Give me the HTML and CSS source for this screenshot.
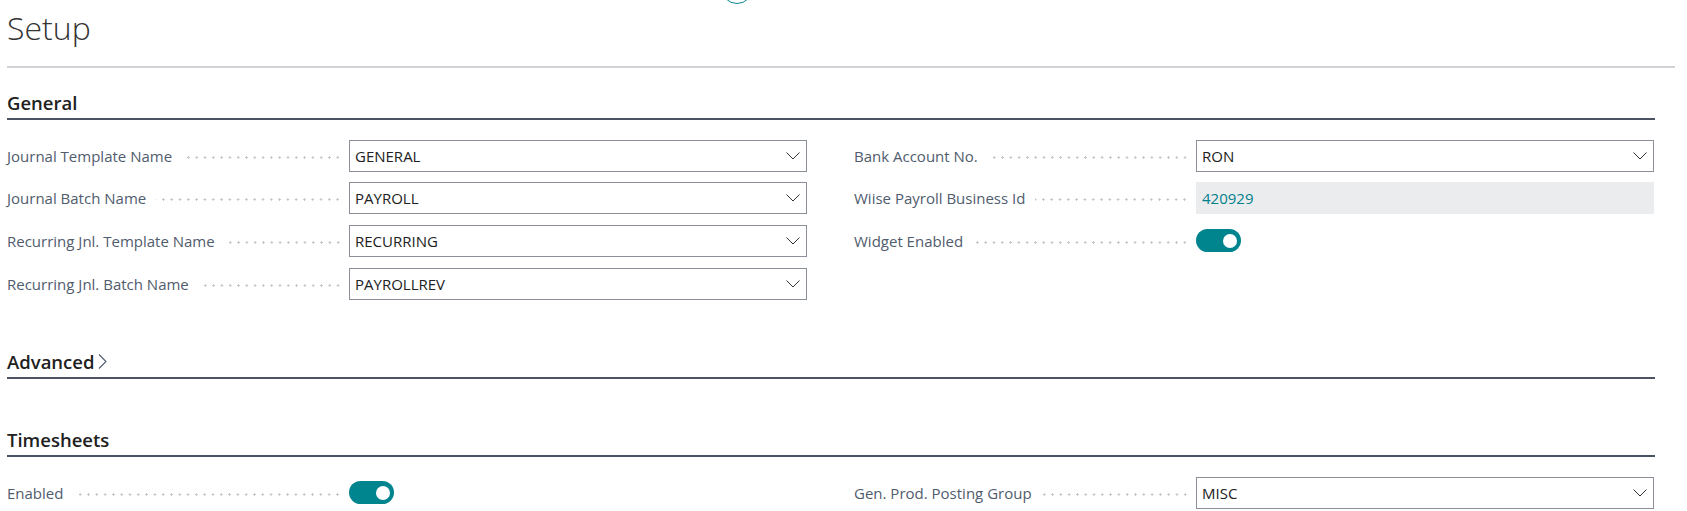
FILE: index.html
```html
<!DOCTYPE html>
<html>
<head>
<meta charset="utf-8">
<link rel="stylesheet" href="styles.css">
</head>
<body>
<div class="page">
  <div class="top-circle"></div>
  <h1 class="title">Setup</h1>
  <div class="title-rule"></div>

  <section class="section">
    <h2 class="sec-head">General</h2>
    <div class="cols">
      <div class="col">
        <div class="row"><span class="label">Journal Template Name</span><span class="leader"></span>
          <div class="field select"><span class="val">GENERAL</span><svg class="chev" viewBox="0 0 14 8"><polyline points="0.5,0.5 7,7 13.5,0.5"/></svg></div></div>
        <div class="row"><span class="label">Journal Batch Name</span><span class="leader"></span>
          <div class="field select"><span class="val">PAYROLL</span><svg class="chev" viewBox="0 0 14 8"><polyline points="0.5,0.5 7,7 13.5,0.5"/></svg></div></div>
        <div class="row"><span class="label">Recurring Jnl. Template Name</span><span class="leader"></span>
          <div class="field select"><span class="val">RECURRING</span><svg class="chev" viewBox="0 0 14 8"><polyline points="0.5,0.5 7,7 13.5,0.5"/></svg></div></div>
        <div class="row"><span class="label">Recurring Jnl. Batch Name</span><span class="leader"></span>
          <div class="field select"><span class="val">PAYROLLREV</span><svg class="chev" viewBox="0 0 14 8"><polyline points="0.5,0.5 7,7 13.5,0.5"/></svg></div></div>
      </div>
      <div class="col">
        <div class="row"><span class="label">Bank Account No.</span><span class="leader"></span>
          <div class="field select"><span class="val">RON</span><svg class="chev" viewBox="0 0 14 8"><polyline points="0.5,0.5 7,7 13.5,0.5"/></svg></div></div>
        <div class="row"><span class="label">Wiise Payroll Business Id</span><span class="leader"></span>
          <div class="field readonly"><span class="val teal">420929</span></div></div>
        <div class="row"><span class="label">Widget Enabled</span><span class="leader"></span>
          <div class="field bare"><span class="toggle"><span class="knob"></span></span></div></div>
      </div>
    </div>
  </section>

  <section class="section gap-top">
    <h2 class="sec-head">Advanced<svg class="more" viewBox="0 0 9 15"><polyline points="1,0.5 8,7.5 1,14.5"/></svg></h2>
  </section>

  <section class="section gap-top2">
    <h2 class="sec-head">Timesheets</h2>
    <div class="cols">
      <div class="col">
        <div class="row"><span class="label">Enabled</span><span class="leader"></span>
          <div class="field bare"><span class="toggle"><span class="knob"></span></span></div></div>
      </div>
      <div class="col">
        <div class="row"><span class="label">Gen. Prod. Posting Group</span><span class="leader"></span>
          <div class="field select"><span class="val">MISC</span><svg class="chev" viewBox="0 0 14 8"><polyline points="0.5,0.5 7,7 13.5,0.5"/></svg></div></div>
      </div>
    </div>
  </section>
</div>
</body>
</html>
```

FILE: styles.css
```css
html, body {
  margin: 0;
  padding: 0;
  background: #ffffff;
}
body {
  font-family: "Open Sans", "Noto Sans", "Liberation Sans", sans-serif;
  color: #212121;
  overflow: hidden;
}
.page {
  position: relative;
  padding: 0 12px 0 7px;
}
.top-circle {
  position: absolute;
  left: 721px;
  top: -28px;
  width: 30px;
  height: 30px;
  border: 1.5px solid #0b8790;
  border-radius: 50%;
}
.title {
  margin: 0;
  padding-top: 8px;
  font-size: 32px;
  line-height: 40px;
  font-weight: 300;
  color: #333333;
}
.title-rule {
  margin-top: 18px;
  height: 2px;
  background: #d1d3d7;
}
.section {
  margin-right: 20px;
}
.sec-head {
  margin: 22.6px 0 0 0;
  font-size: 18.5px;
  line-height: 24px;
  font-weight: 600;
  color: #212121;
  padding-bottom: 3px;
  border-bottom: 2px solid #4b5262;
  display: flex;
  align-items: center;
}
.gap-top .sec-head { margin-top: 50.3px; }
.gap-top2 .sec-head { margin-top: 49px; }
.more {
  width: 9px;
  height: 15px;
  margin-left: 4px;
  fill: none;
  stroke: #505c6d;
  stroke-width: 1.1;
}
.cols {
  display: grid;
  grid-template-columns: 800px 800px;
  column-gap: 47px;
  margin-top: 20px;
}
.col {
  display: flex;
  flex-direction: column;
  gap: 10.67px;
}
.row {
  display: flex;
  align-items: center;
  height: 32px;
}
.label {
  font-size: 15px;
  line-height: 32px;
  color: #505c6d;
  white-space: nowrap;
}
.leader {
  flex: 1;
  height: 3px;
  margin: 3px 7px 0 10px;
  background-image: radial-gradient(circle, #c3c6ca 1px, transparent 1.3px);
  background-size: 8.3px 3px;
  background-repeat: repeat-x;
  background-position: right center;
}
.field {
  width: 458px;
  height: 32px;
  box-sizing: border-box;
  display: flex;
  align-items: center;
  flex: none;
}
.select {
  border: 1px solid #8a8f98;
  padding: 0 6px 0 5px;
}
.readonly {
  background: #ebecee;
  padding: 0 6px 0 6px;
}
.bare {
  padding: 0;
}
.val {
  flex: 1;
  font-size: 15px;
  line-height: 30px;
  color: #212121;
}
.teal {
  color: #00818b;
}
.chev {
  width: 14px;
  height: 8px;
  fill: none;
  stroke: #333333;
  stroke-width: 1;
}
.toggle {
  position: relative;
  width: 45px;
  height: 23px;
  border-radius: 12px;
  background: #00848d;
}
.knob {
  position: absolute;
  right: 4px;
  top: 4.5px;
  width: 14px;
  height: 14px;
  border-radius: 50%;
  background: #ffffff;
}
```
